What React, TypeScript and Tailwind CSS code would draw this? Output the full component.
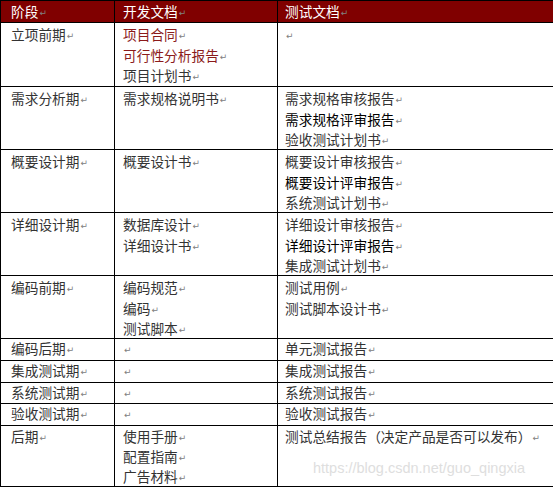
import React from "react";

type Line = { t: string; c?: "red" | "black" };

const R = () => (
  <span className="ml-px inline-block align-[1px] text-[9px] leading-none text-[#808080]" style={{ fontFamily: '"DejaVu Sans", sans-serif' }}>
    ↵
  </span>
);

const rows: { h: string; lh: string; a: Line[]; b: Line[]; c: Line[] }[] = [
  { h: "h-[63px]", lh: "pt-[1px] leading-[20.5px]", a: [{ t: "立项前期" }], b: [{ t: "项目合同", c: "red" }, { t: "可行性分析报告", c: "red" }, { t: "项目计划书" }], c: [{ t: "" }] },
  { h: "h-[62px]", lh: "pt-[1px] leading-[20.5px]", a: [{ t: "需求分析期" }], b: [{ t: "需求规格说明书" }], c: [{ t: "需求规格审核报告" }, { t: "需求规格评审报告", c: "black" }, { t: "验收测试计划书" }] },
  { h: "h-[62px]", lh: "pt-[1px] leading-[20.5px]", a: [{ t: "概要设计期" }], b: [{ t: "概要设计书" }], c: [{ t: "概要设计审核报告" }, { t: "概要设计评审报告", c: "black" }, { t: "系统测试计划书" }] },
  { h: "h-[62px]", lh: "pt-[1px] leading-[20.5px]", a: [{ t: "详细设计期" }], b: [{ t: "数据库设计" }, { t: "详细设计书" }], c: [{ t: "详细设计审核报告" }, { t: "详细设计评审报告", c: "black" }, { t: "集成测试计划书" }] },
  { h: "h-[62px]", lh: "pt-[1px] leading-[20.5px]", a: [{ t: "编码前期" }], b: [{ t: "编码规范" }, { t: "编码" }, { t: "测试脚本" }], c: [{ t: "测试用例" }, { t: "测试脚本设计书" }] },
  { h: "h-[21px]", lh: "pt-0 leading-[19px]", a: [{ t: "编码后期" }], b: [{ t: "" }], c: [{ t: "单元测试报告" }] },
  { h: "h-[21px]", lh: "pt-0 leading-[19px]", a: [{ t: "集成测试期" }], b: [{ t: "" }], c: [{ t: "集成测试报告" }] },
  { h: "h-[20px]", lh: "pt-0 leading-[19px]", a: [{ t: "系统测试期" }], b: [{ t: "" }], c: [{ t: "系统测试报告" }] },
  { h: "h-[21px]", lh: "pt-0 leading-[19px]", a: [{ t: "验收测试期" }], b: [{ t: "" }], c: [{ t: "验收测试报告" }] },
  { h: "h-[60px]", lh: "pt-0 leading-[20px]", a: [{ t: "后期" }], b: [{ t: "使用手册" }, { t: "配置指南" }, { t: "广告材料" }], c: [{ t: "测试总结报告（决定产品是否可以发布）" }] },
];

function Cell({ lines, pl, lh, h }: { lines: Line[]; pl: string; lh: string; h: string }) {
  return (
    <div className={`${h} overflow-hidden bg-white ${pl} ${lh}`}>
      {lines.map((l, i) => (
        <div
          key={i}
          className={
            l.c === "red" ? "text-[#8b1a1a]" : l.c === "black" ? "text-black" : "text-[#333333]"
          }
        >
          {l.t}
          <R />
        </div>
      ))}
    </div>
  );
}

export default function App() {
  return (
    <div className="relative h-[488px] w-[553px] overflow-hidden bg-white">
      <div
        className="grid w-[620px] grid-cols-[113px_162px_1fr] gap-px bg-black p-px text-[13.7px]"
        style={{ fontFamily: '"Noto Sans CJK SC", "Noto Sans", sans-serif' }}
      >
        <div className="h-[21px] bg-[#800000] pl-[10px] leading-[21px] text-white">
          阶段
          <R />
        </div>
        <div className="h-[21px] bg-[#800000] pl-[8px] leading-[21px] text-white">
          开发文档
          <R />
        </div>
        <div className="h-[21px] bg-[#800000] pl-[7px] leading-[21px] text-white">
          测试文档
          <R />
        </div>
        {rows.map((r, i) => (
          <React.Fragment key={i}>
            <Cell lines={r.a} pl="pl-[10px]" lh={r.lh} h={r.h} />
            <Cell lines={r.b} pl="pl-[8px]" lh={r.lh} h={r.h} />
            <Cell lines={r.c} pl="pl-[7px]" lh={r.lh} h={r.h} />
          </React.Fragment>
        ))}
      </div>
      <div
        className="absolute left-[313px] top-[459px] text-[14.5px] leading-[18px] text-[#dedede]"
        style={{ fontFamily: '"Liberation Sans", Arial, sans-serif' }}
      >
        https://blog.csdn.net/guo_qingxia
      </div>
    </div>
  );
}
